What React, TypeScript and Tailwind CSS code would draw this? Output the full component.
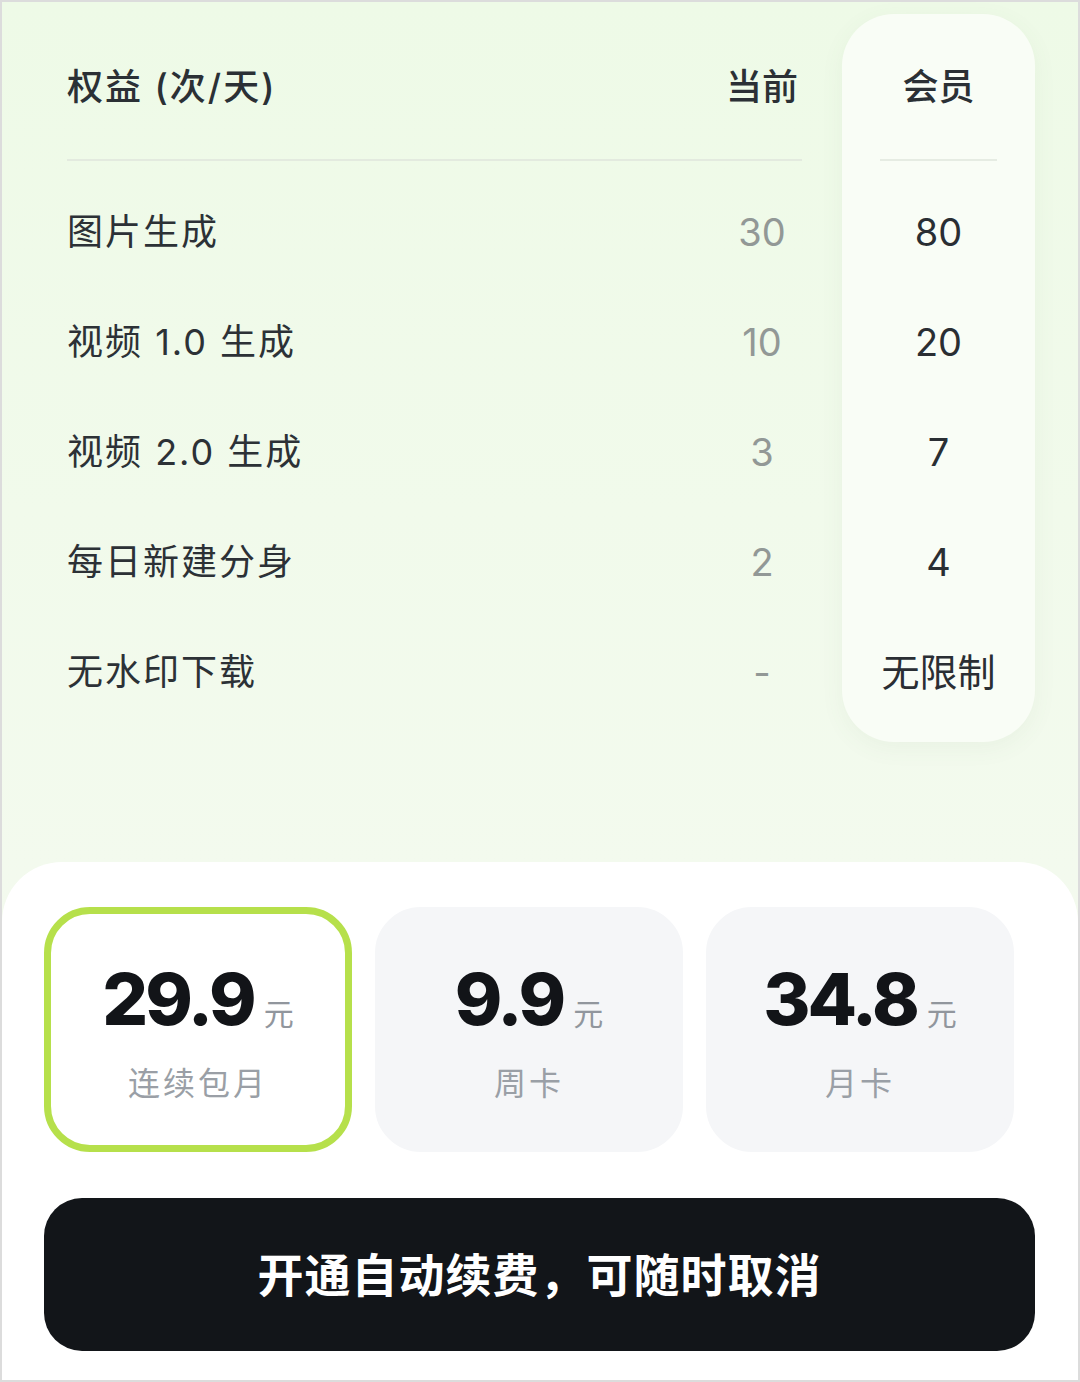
import React from "react";

const rows = [
  { label: "图片生成", cur: "30", mem: "80" },
  { label: "视频 1.0 生成", cur: "10", mem: "20" },
  { label: "视频 2.0 生成", cur: "3", mem: "7" },
  { label: "每日新建分身", cur: "2", mem: "4" },
  { label: "无水印下载", cur: "-", mem: "无限制" },
];

const plans = [
  { price: "29.9", name: "连续包月", active: true },
  { price: "9.9", name: "周卡", active: false },
  { price: "34.8", name: "月卡", active: false },
];

const cjk = { fontFamily: 'Inter, "Noto Sans CJK SC", "Noto Sans", sans-serif' };
const num = { fontFamily: 'Inter, "Noto Sans", sans-serif' };

export default function App() {
  return (
    <div
      className="w-[1080px] h-[1382px] border-2 border-[#dcdcdc] flex flex-col bg-gradient-to-b from-[#eefae7] to-[#f6faf2] overflow-hidden"
      style={cjk}
    >
      <div className="h-[860px] shrink-0 flex pl-[65px] pt-[12px]">
        <div className="w-[735px] flex flex-col">
          <div className="h-[145px] flex items-center justify-between">
            <span className="text-[36px] font-medium text-[#2b3035] leading-none tracking-[2px]">权益 (次/天)</span>
            <span className="w-[80px] text-center text-[36px] font-medium text-[#2b3035] leading-none">当前</span>
          </div>
          <div className="h-[2px] bg-[#e3eadf]" />
          <div className="pt-[16px] flex flex-col">
            {rows.map((r) => (
              <div key={r.label} className="h-[110px] flex items-center justify-between">
                <span className="text-[36px] tracking-[2px] text-[#2c3136] leading-none">{r.label}</span>
                <span className="w-[80px] text-center text-[38px] text-[#929896] leading-none" style={num}>
                  {r.cur}
                </span>
              </div>
            ))}
          </div>
        </div>
        <div className="ml-[40px] w-[193px] h-[728px] rounded-[52px] bg-[#f9fdf6] shadow-[0_6px_24px_rgba(90,120,80,0.06)] flex flex-col">
          <div className="h-[145px] flex items-center justify-center">
            <span className="text-[36px] font-medium text-[#2b3035] leading-none">会员</span>
          </div>
          <div className="h-[2px] mx-[38px] bg-[#e6ece3]" />
          <div className="pt-[16px] flex flex-col">
            {rows.map((r) => (
              <div key={r.label} className="h-[110px] flex items-center justify-center">
                <span className="text-[38px] text-[#2a2e33] leading-none">{r.mem}</span>
              </div>
            ))}
          </div>
        </div>
      </div>

      <div className="flex-1 bg-white rounded-t-[60px] px-[42px] pt-[45px] flex flex-col">
        <div className="flex gap-[23px]">
          {plans.map((p) => (
            <div
              key={p.name}
              className={
                p.active
                  ? "w-[308px] h-[245px] rounded-[46px] border-[7px] border-[#b6e04b] bg-white flex flex-col items-center pt-[49px]"
                  : "w-[308px] h-[245px] rounded-[46px] border-[7px] border-[#f5f6f8] bg-[#f5f6f8] flex flex-col items-center pt-[49px]"
              }
            >
              <div className="flex items-baseline">
                <span className="text-[72px] font-extrabold text-[#121418] leading-none tracking-[-3px]" style={num}>
                  {p.price}
                </span>
                <span className="ml-[10px] text-[30px] text-[#91969d] leading-none">元</span>
              </div>
              <div className="mt-[33px] text-[32px] tracking-[3px] text-[#9a9fa6] leading-none">{p.name}</div>
            </div>
          ))}
        </div>
        <div className="mt-[46px] h-[153px] w-[991px] rounded-[38px] bg-[#121519] flex items-center justify-center">
          <span className="text-[46px] font-semibold text-white leading-none tracking-[1px]">
            开通自动续费，可随时取消
          </span>
        </div>
      </div>
    </div>
  );
}
